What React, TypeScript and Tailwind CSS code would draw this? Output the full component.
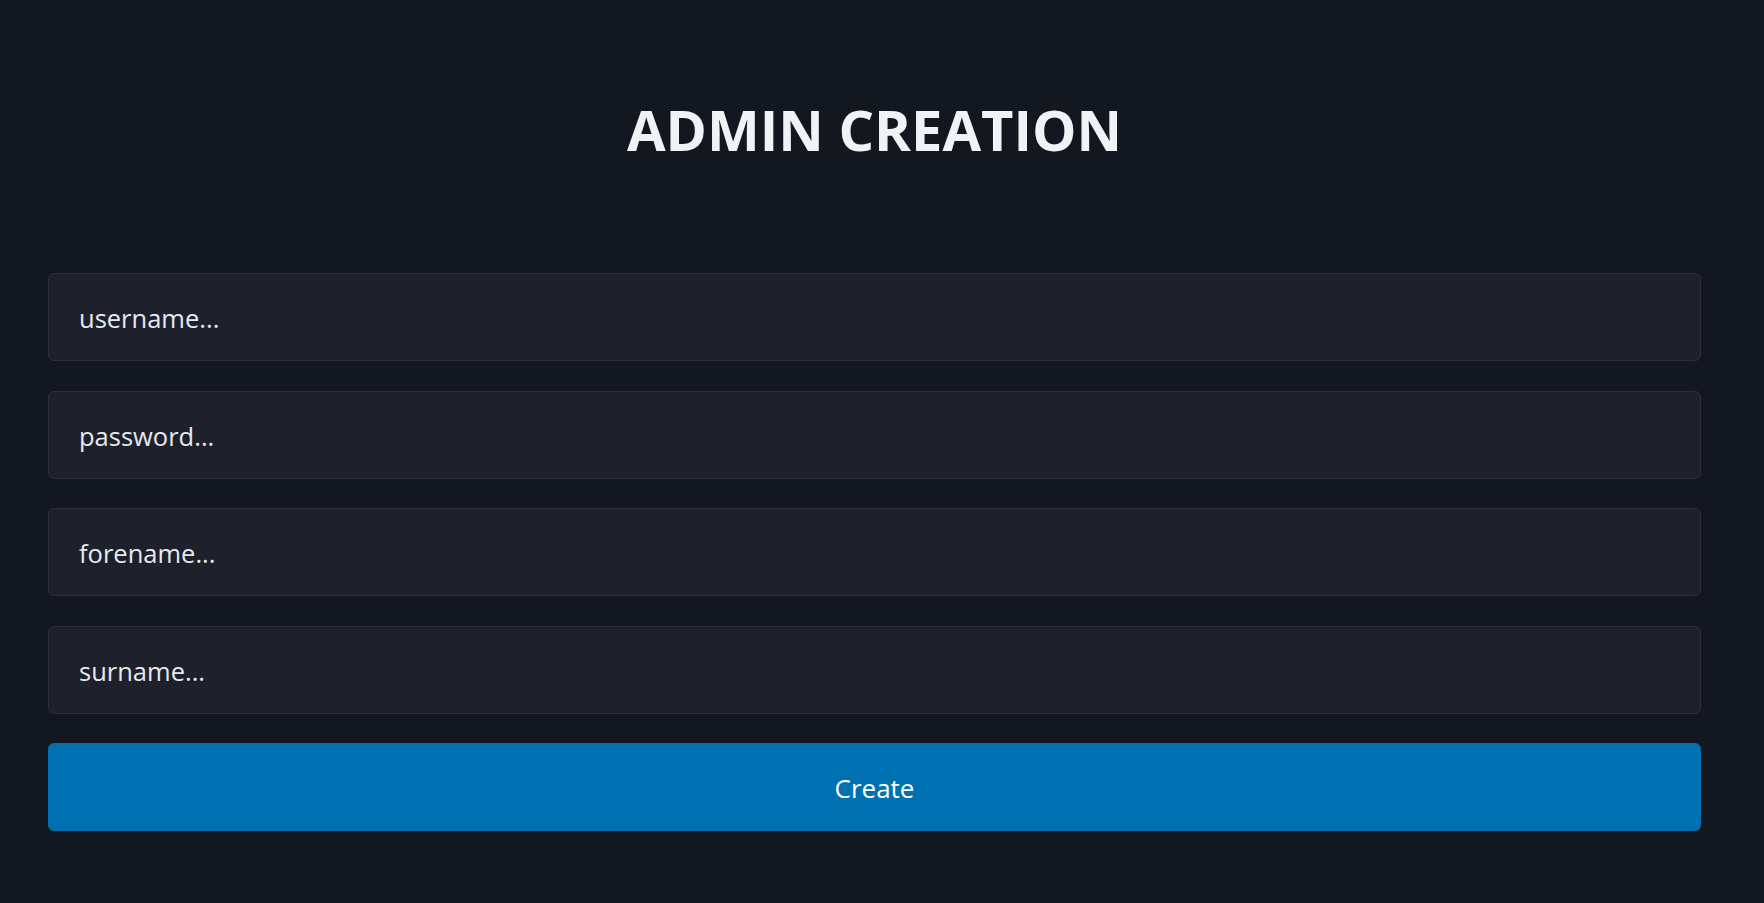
import { useState } from 'react';

export default function App() {
  const [username, setUsername] = useState('');
  const [password, setPassword] = useState('');
  const [forename, setForename] = useState('');
  const [surname, setSurname] = useState('');

  const inputClass =
    'w-full h-[88px] px-[30px] pt-[2px] bg-[#1e212b] border border-[#2c303b] rounded-md text-[25.5px] text-gray-100 placeholder:text-[#e6e9ef] outline-none';

  return (
    <div className="min-h-[903px] w-full bg-[#13171f] font-['Open_Sans',sans-serif]">
      <div className="w-[1749px] px-12">
        <h1 className="pt-[89px] h-[273px] text-center text-[56px] leading-[80px] font-bold text-[#f0f2f5]">
          ADMIN CREATION
        </h1>

        <form onSubmit={(e) => e.preventDefault()} className="flex flex-col gap-[29.5px]">
          <input
            type="text"
            value={username}
            onChange={(e) => setUsername(e.target.value)}
            placeholder="username..."
            className={inputClass}
          />
          <input
            type="password"
            value={password}
            onChange={(e) => setPassword(e.target.value)}
            placeholder="password..."
            className={inputClass}
          />
          <input
            type="text"
            value={forename}
            onChange={(e) => setForename(e.target.value)}
            placeholder="forename..."
            className={inputClass}
          />
          <input
            type="text"
            value={surname}
            onChange={(e) => setSurname(e.target.value)}
            placeholder="surname..."
            className={inputClass}
          />
          <button
            type="submit"
            className="w-full h-[88px] pt-[3px] bg-[#0071b0] rounded-md text-[26px] text-white"
          >
            Create
          </button>
        </form>
      </div>
    </div>
  );
}
